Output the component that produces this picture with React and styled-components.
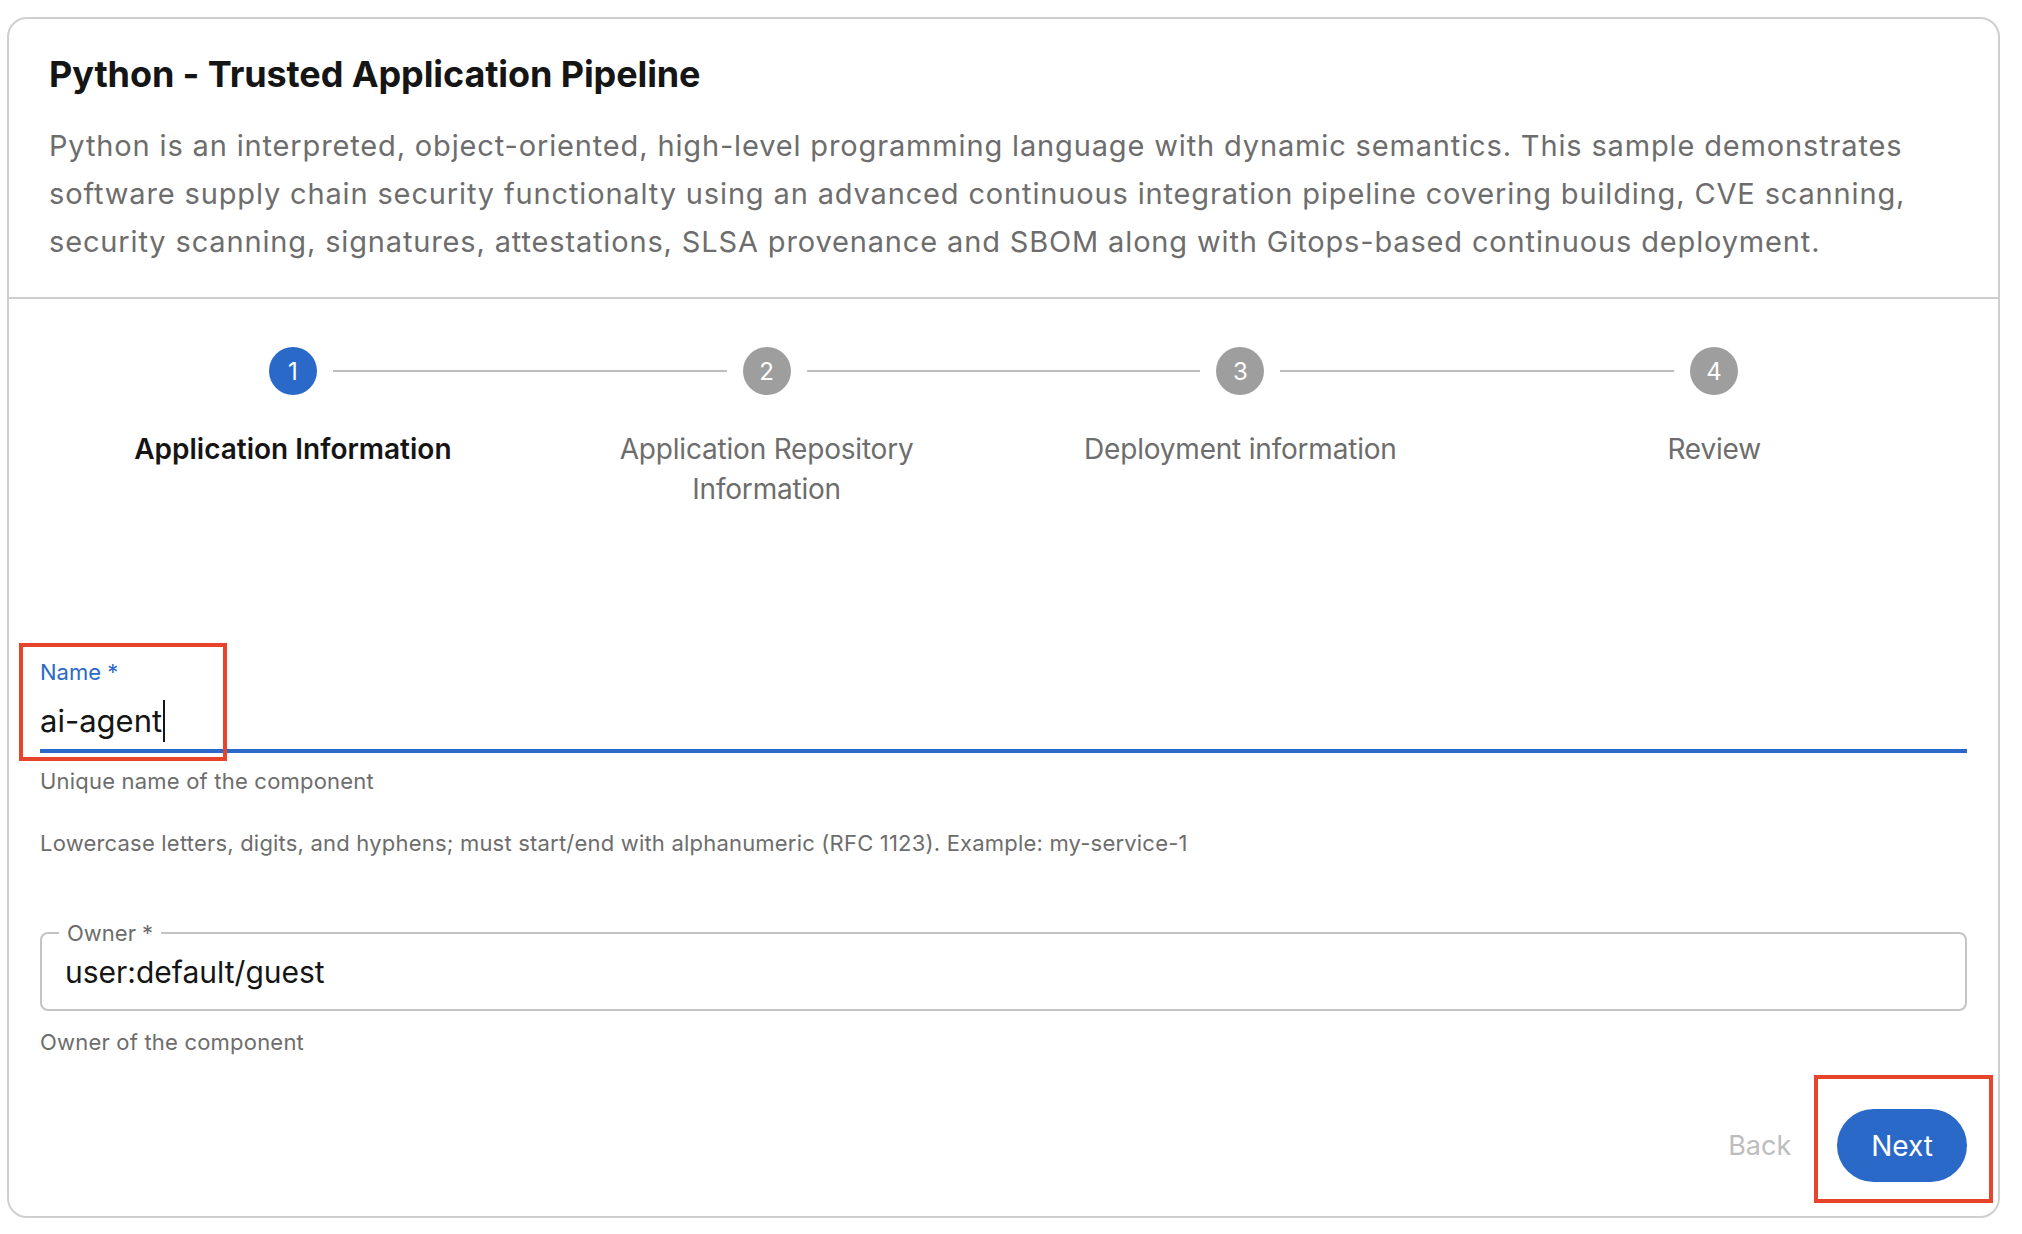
import React from "react";
import styled, { createGlobalStyle } from "styled-components";

const Global = createGlobalStyle`
  html, body {
    margin: 0;
    background: #ffffff;
  }
  body {
    font-family: Inter, "Liberation Sans", sans-serif;
    color: #151515;
  }
`;

const Page = styled.div`
  padding: 17px 22px 17px 7px;
`;

const Card = styled.div`
  height: 1201px;
  box-sizing: border-box;
  border: 2px solid #cfcfcf;
  border-radius: 20px;
  display: flex;
  flex-direction: column;
`;

const Header = styled.div`
  padding: 33px 40px 31px 40px;
  border-bottom: 2px solid #cfcfcf;
`;

const Title = styled.h1`
  margin: 0;
  font-size: 36px;
  line-height: 44px;
  font-weight: 700;
  color: #151515;
  letter-spacing: -0.1px;
`;

const Description = styled.p`
  margin: 26px 0 0;
  font-size: 29px;
  line-height: 48px;
  letter-spacing: 0.85px;
  color: #6d6d6d;
`;

const Stepper = styled.div`
  display: grid;
  grid-template-columns: repeat(4, 1fr);
  padding: 48px 47px 0;
`;

const Step = styled.div`
  display: flex;
  flex-direction: column;
  align-items: center;
`;

const StepHead = styled.div`
  display: flex;
  align-items: center;
  width: 100%;
`;

const Connector = styled.div`
  flex: 1;
  height: 2px;
  background: ${(p) => (p.$show ? "#bdbdbd" : "transparent")};
  margin-left: ${(p) => (p.$side === "right" ? "16px" : "0")};
  margin-right: ${(p) => (p.$side === "left" ? "16px" : "0")};
`;

const Circle = styled.div`
  width: 48px;
  height: 48px;
  border-radius: 50%;
  flex: none;
  display: flex;
  align-items: center;
  justify-content: center;
  background: ${(p) => (p.$active ? "#2a69c8" : "#9e9e9e")};
  color: #ffffff;
  font-size: 24px;
`;

const StepLabel = styled.div`
  margin-top: 34px;
  max-width: 380px;
  text-align: center;
  font-size: 28px;
  line-height: 40px;
  letter-spacing: ${(p) => (p.$active ? "0" : "-0.2px")};
  font-weight: ${(p) => (p.$active ? 600 : 400)};
  color: ${(p) => (p.$active ? "#151515" : "#6d6d6d")};
`;

const Form = styled.div`
  padding: 0 31px;
  margin-top: 150px;
  display: flex;
  flex-direction: column;
`;

const NameField = styled.div`
  position: relative;
  display: flex;
  flex-direction: column;
`;

const FloatLabel = styled.label`
  font-size: 22px;
  line-height: 26px;
  color: #2a69c8;
`;

const Underlined = styled.div`
  margin-top: 12px;
  height: 48px;
  padding-bottom: 4px;
  border-bottom: 4px solid #2a69c8;
  display: flex;
  align-items: center;
  font-size: 31px;
  line-height: 48px;
  color: #151515;
`;

const Caret = styled.span`
  display: inline-block;
  width: 2px;
  height: 42px;
  background: #151515;
  margin-left: 1px;
`;

const Helper = styled.div`
  margin-top: ${(p) => p.$gap}px;
  font-size: 22px;
  line-height: 30px;
  letter-spacing: 0.2px;
  color: #6d6d6d;
`;

const Outlined = styled.fieldset`
  margin: 62px 0 0;
  padding: 0 23px 11px;
  border: 2px solid #c4c4c4;
  border-radius: 8px;
  min-width: 0;
`;

const Legend = styled.legend`
  margin-left: -6px;
  padding: 0 8px;
  font-size: 22px;
  line-height: 26px;
  color: #6d6d6d;
`;

const OutlinedValue = styled.div`
  font-size: 30px;
  line-height: 52px;
  color: #151515;
`;

const Footer = styled.div`
  margin-top: 52px;
  display: flex;
  justify-content: flex-end;
  align-items: center;
  gap: 12px;
`;

const Button = styled.button`
  position: relative;
  height: 73px;
  border: none;
  border-radius: 37px;
  padding: 0 34px;
  font-family: inherit;
  font-size: ${(p) => (p.$primary ? "28px" : "27px")};
  background: ${(p) => (p.$primary ? "#2a69c8" : "transparent")};
  color: ${(p) => (p.$primary ? "#ffffff" : "#bdbdbd")};
  cursor: pointer;
`;

const Highlight = styled.span`
  position: absolute;
  box-sizing: border-box;
  border: 4px solid #e8432b;
  pointer-events: none;
  left: ${(p) => p.$x}px;
  top: ${(p) => p.$y}px;
  width: ${(p) => p.$w}px;
  height: ${(p) => p.$h}px;
`;

const steps = [
  "Application Information",
  "Application Repository Information",
  "Deployment information",
  "Review",
];

export default function App() {
  return (
    <>
      <Global />
      <Page>
        <Card>
          <Header>
            <Title>Python - Trusted Application Pipeline</Title>
            <Description>
              Python is an interpreted, object-oriented, high-level programming
              language with dynamic semantics. This sample demonstrates software
              supply chain security functionalty using an advanced continuous
              integration pipeline covering building, CVE scanning, security
              scanning, signatures, attestations, SLSA provenance and SBOM along
              with Gitops-based continuous deployment.
            </Description>
          </Header>

          <Stepper>
            {steps.map((label, i) => (
              <Step key={label}>
                <StepHead>
                  <Connector $side="left" $show={i > 0} />
                  <Circle $active={i === 0}>{i + 1}</Circle>
                  <Connector $side="right" $show={i < steps.length - 1} />
                </StepHead>
                <StepLabel $active={i === 0}>{label}</StepLabel>
              </Step>
            ))}
          </Stepper>

          <Form>
            <NameField>
              <FloatLabel>Name *</FloatLabel>
              <Underlined>
                ai-agent
                <Caret />
              </Underlined>
              <Highlight $x={-21} $y={-16} $w={208} $h={118} />
            </NameField>
            <Helper $gap={13}>Unique name of the component</Helper>
            <Helper $gap={32}>
              Lowercase letters, digits, and hyphens; must start/end with
              alphanumeric (RFC 1123). Example: my-service-1
            </Helper>

            <Outlined>
              <Legend>Owner *</Legend>
              <OutlinedValue>user:default/guest</OutlinedValue>
            </Outlined>
            <Helper $gap={16}>Owner of the component</Helper>

            <Footer>
              <Button disabled>Back</Button>
              <Button $primary>
                Next
                <Highlight $x={-23} $y={-34} $w={179} $h={128} />
              </Button>
            </Footer>
          </Form>
        </Card>
      </Page>
    </>
  );
}
